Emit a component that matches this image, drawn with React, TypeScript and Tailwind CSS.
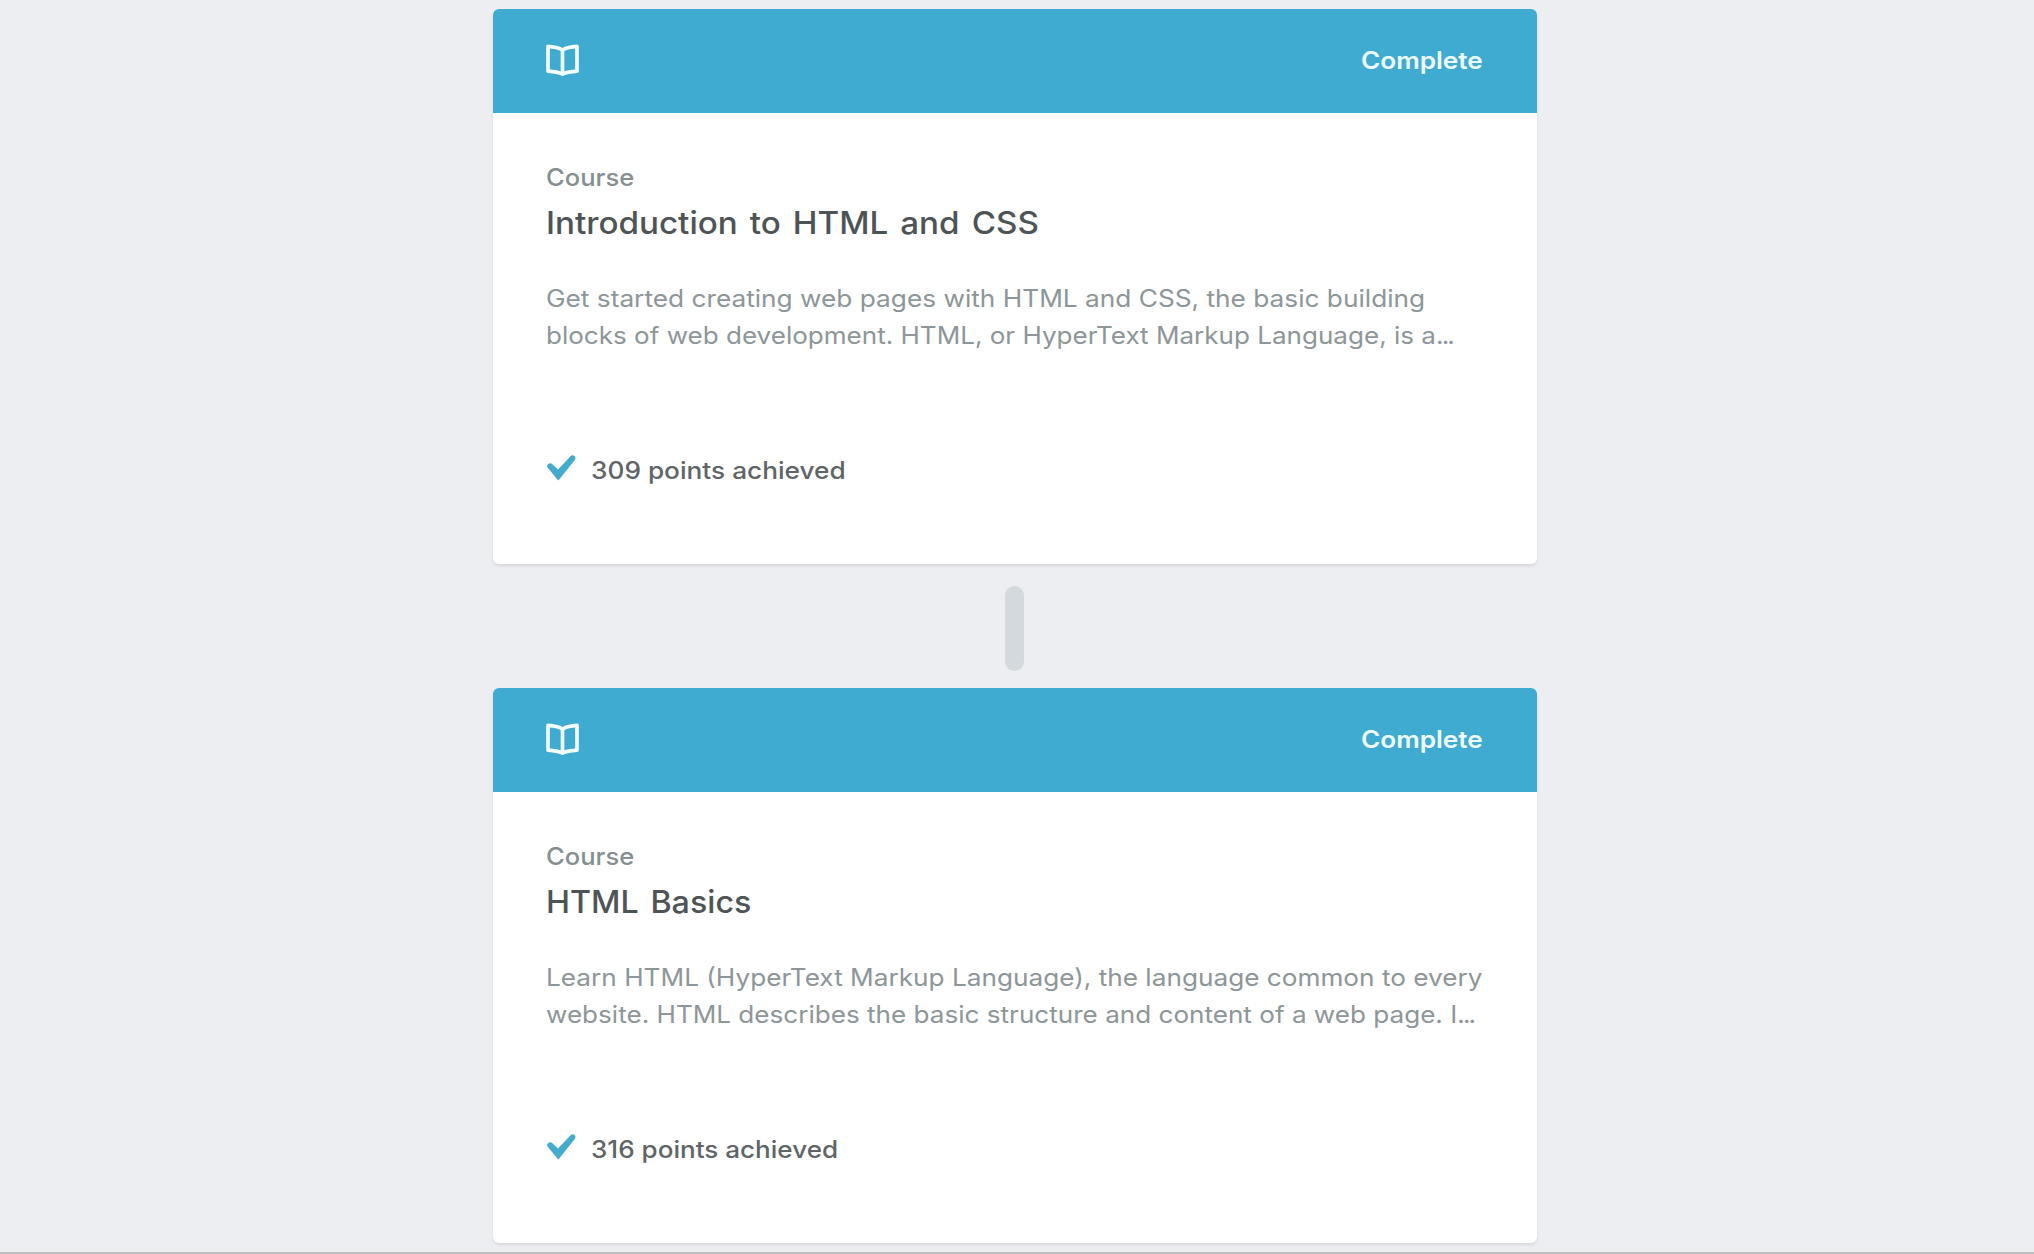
type Line = { text: string; stretch: string };

type Course = {
  title: Line;
  lines: Line[];
  points: Line;
};

const courses: Course[] = [
  {
    title: { text: "Introduction to HTML and CSS", stretch: "scale-x-[1.07] [word-spacing:3px]" },
    lines: [
      {
        text: "Get started creating web pages with HTML and CSS, the basic building",
        stretch: "scale-x-[1.093]",
      },
      {
        text: "blocks of web development. HTML, or HyperText Markup Language, is a...",
        stretch: "scale-x-[1.085]",
      },
    ],
    points: { text: "309 points achieved", stretch: "scale-x-[1.093]" },
  },
  {
    title: { text: "HTML Basics", stretch: "scale-x-[1.04] [word-spacing:3px]" },
    lines: [
      {
        text: "Learn HTML (HyperText Markup Language), the language common to every",
        stretch: "scale-x-[1.091]",
      },
      {
        text: "website. HTML describes the basic structure and content of a web page. I...",
        stretch: "scale-x-[1.087]",
      },
    ],
    points: { text: "316 points achieved", stretch: "scale-x-[1.086]" },
  },
];

function BookIcon() {
  return (
    <svg className="-mt-[2px]" width="33" height="33" viewBox="0 0 33 33" fill="none" stroke="#f2fdff" strokeWidth="3.7" strokeLinejoin="round">
      <path d="M2 2.4C7 2.7 12 3.5 16.5 6C21 3.5 26 2.7 31 2.4V27.2C26 27.5 21 28 16.5 30.2C12 28 7 27.5 2 27.2Z" />
      <path d="M16.5 6V30" />
    </svg>
  );
}

function CheckIcon() {
  return (
    <svg width="29" height="26" viewBox="0 0 29 26" fill="#43abcb">
      <path d="M1 12.9C-.3 11.6-.3 10.4 1 9.2C2.3 7.9 4.1 7.9 5.4 9.2L11 14.6L23.3 1.4C24.6 0 26.2-.1 27.5 1C28.8 2.2 28.8 3.8 27.6 5.2L12.2 24.6C11.6 25.4 11.2 25.4 10.6 24.7Z" />
    </svg>
  );
}

function BodyLine({ line }: { line: Line }) {
  const clipped = line.text.endsWith("...");
  return (
    <p className={`origin-left ${line.stretch}`}>
      {clipped ? line.text.slice(0, -3) : line.text}
      {clipped && <span className="tracking-[-1.7px]">...</span>}
    </p>
  );
}

function CourseCard({ course }: { course: Course }) {
  return (
    <article className="h-[555px] w-[1044px] shrink-0 overflow-hidden rounded-[6px] bg-white shadow-[0_2px_3px_rgba(0,0,0,0.09)]">
      <header className="flex h-[104px] items-center justify-between bg-[#3fabd0] pr-[54px] pl-[53px]">
        <BookIcon />
        <span className="origin-right scale-x-[1.09] text-[24px] leading-8 font-semibold text-[#effcff]">Complete</span>
      </header>
      <div className="pt-[49px] pl-[53px] whitespace-nowrap">
        <p className="origin-left scale-x-[1.065] text-[24px] leading-8 font-medium text-[#858f91]">Course</p>
        <h2 className={`mt-[7px] origin-left text-[31px] leading-[44px] font-medium text-[#4e5456] ${course.title.stretch}`}>
          {course.title.text}
        </h2>
        <div className="mt-[35px] text-[24px] leading-[37px] text-[#8d9698]">
          {course.lines.map((line) => (
            <BodyLine key={line.text} line={line} />
          ))}
        </div>
        <div className="mt-[101px] flex h-8 items-center">
          <div className="-mt-[6px] w-[45px] pl-px">
            <CheckIcon />
          </div>
          <span className={`origin-left text-[24px] leading-8 font-medium text-[#5f6567] ${course.points.stretch}`}>
            {course.points.text}
          </span>
        </div>
      </div>
    </article>
  );
}

export default function App() {
  return (
    <main className="flex h-[1254px] w-full flex-col overflow-hidden border-b-2 border-[#bcbec0] bg-[#edeef2] pt-[9px] pl-[492.5px] font-['Inter',sans-serif]">
      <CourseCard course={courses[0]} />
      <div className="mt-[22px] mb-[17px] ml-[512.5px] h-[85px] w-[19px] shrink-0 rounded-full bg-[#d3d9dc]" />
      <CourseCard course={courses[1]} />
    </main>
  );
}
